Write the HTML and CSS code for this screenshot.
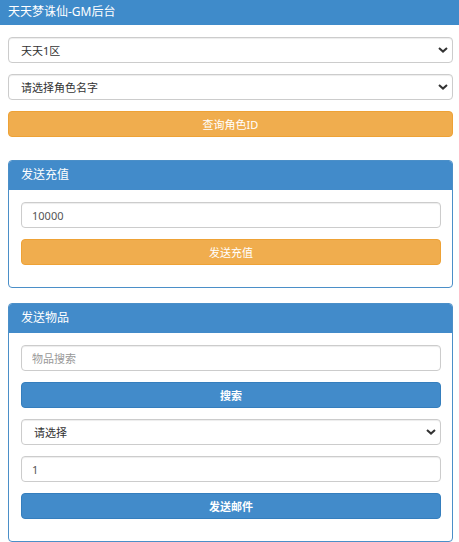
FILE: index.html
```html
<!DOCTYPE html>
<html lang="zh-CN">
<head>
<meta charset="utf-8">
<title>天天梦诛仙-GM后台</title>
<link rel="stylesheet" href="styles.css">
</head>
<body>
<div class="topbar">天天梦诛仙-GM后台</div>
<div class="main">
  <div class="stack">
    <div class="select-wrap">
      <select class="field select"><option>天天1区</option></select>
      <svg class="chev" width="10" height="6" viewBox="0 0 10 6"><path d="M1 1 L5 4.6 L9 1" fill="none" stroke="#333" stroke-width="2"/></svg>
    </div>
    <div class="select-wrap">
      <select class="field select"><option>请选择角色名字</option></select>
      <svg class="chev" width="10" height="6" viewBox="0 0 10 6"><path d="M1 1 L5 4.6 L9 1" fill="none" stroke="#333" stroke-width="2"/></svg>
    </div>
    <button class="btn btn-warning">查询角色ID</button>
  </div>

  <div class="panel panel-first">
    <div class="panel-heading">发送充值</div>
    <div class="panel-body stack">
      <input class="field input" type="text" value="10000">
      <button class="btn btn-warning">发送充值</button>
    </div>
  </div>

  <div class="panel">
    <div class="panel-heading">发送物品</div>
    <div class="panel-body stack">
      <input class="field input" type="text" placeholder="物品搜索">
      <button class="btn btn-primary">搜索</button>
      <div class="select-wrap">
        <select class="field select"><option>请选择</option></select>
        <svg class="chev" width="10" height="6" viewBox="0 0 10 6"><path d="M1 1 L5 4.6 L9 1" fill="none" stroke="#333" stroke-width="2"/></svg>
      </div>
      <input class="field input" type="text" value="1">
      <button class="btn btn-primary">发送邮件</button>
    </div>
  </div>
</div>
</body>
</html>
```
FILE: styles.css
```css
* { box-sizing: border-box; }
body {
  margin: 0;
  background: #fff;
  font-family: "Noto Sans", "Noto Sans CJK SC", sans-serif;
  color: #333;
}
.topbar {
  height: 25px;
  line-height: 24px;
  padding-left: 8px;
  background: #3f8bca;
  color: #fff;
  font-size: 12px;
}
.main {
  padding: 12px 6px 0 8px;
}
.stack {
  display: flex;
  flex-direction: column;
  gap: 11px;
}
.field {
  display: block;
  width: 100%;
  height: 26px;
  margin: 0;
  border: 1px solid #ccc;
  border-radius: 4px;
  background: #fff;
  font-family: "Noto Sans", "Noto Sans CJK SC", sans-serif;
  font-size: 11px;
  color: #555;
  box-shadow: inset 0 1px 1px rgba(0,0,0,0.075);
  outline: none;
}
.input {
  padding: 0 10px;
}
.input::placeholder { color: #999; }
.select {
  -webkit-appearance: none;
  appearance: none;
  padding: 0 20px 0 12px;
  color: #333;
}
.select-wrap {
  position: relative;
}
.chev {
  position: absolute;
  right: 5px;
  top: 10px;
  pointer-events: none;
}
.btn {
  display: block;
  width: 100%;
  height: 26px;
  margin: 0;
  border: 1px solid transparent;
  border-radius: 4px;
  font-family: "Noto Sans", "Noto Sans CJK SC", sans-serif;
  font-size: 11px;
  color: #fff;
  padding: 0;
}
.btn-warning {
  background: #f0ad4e;
  border-color: #eea236;
}
.btn-primary {
  background: #428bca;
  border-color: #357ebd;
  font-weight: bold;
}
.panel {
  margin-top: 15px;
  border: 1px solid #4b8fc8;
  border-radius: 4px;
  overflow: hidden;
}
.panel-first {
  margin-top: 23px;
}
.panel-heading {
  height: 29px;
  line-height: 28px;
  padding-left: 12px;
  background: #428bca;
  color: #fff;
  font-size: 12px;
}
.panel-body {
  padding: 12px 11px 22px 12px;
}
```
